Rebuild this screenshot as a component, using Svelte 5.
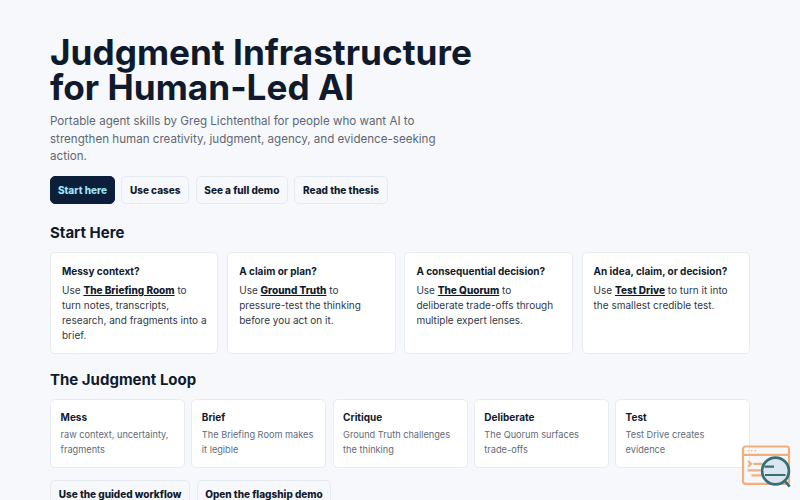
<script lang="ts">
	type Step = {
		title: string;
		text: string;
	};

	type Path = {
		title: string;
		skill: string;
		rest: string;
	};

	const links = ['Start here', 'Use cases', 'See a full demo', 'Read the thesis'];

	const paths: Path[] = [
		{
			title: 'Messy context?',
			skill: 'The Briefing Room',
			rest: 'to turn notes, transcripts, research, and fragments into a brief.'
		},
		{
			title: 'A claim or plan?',
			skill: 'Ground Truth',
			rest: 'to pressure-test the thinking before you act on it.'
		},
		{
			title: 'A consequential decision?',
			skill: 'The Quorum',
			rest: 'to deliberate trade-offs through multiple expert lenses.'
		},
		{
			title: 'An idea, claim, or decision?',
			skill: 'Test Drive',
			rest: 'to turn it into the smallest credible test.'
		}
	];

	const steps: Step[] = [
		{ title: 'Mess', text: 'raw context, uncertainty, fragments' },
		{ title: 'Brief', text: 'The Briefing Room makes it legible' },
		{ title: 'Critique', text: 'Ground Truth challenges the thinking' },
		{ title: 'Deliberate', text: 'The Quorum surfaces trade-offs' },
		{ title: 'Test', text: 'Test Drive creates evidence' }
	];
</script>

<main>
	<h1>Judgment Infrastructure for Human-Led AI</h1>
	<p class="lead">
		Portable agent skills by Greg Lichtenthal for people who want AI to strengthen human
		creativity, judgment, agency, and evidence-seeking action.
	</p>
	<nav class="actions">
		{#each links as link, i}
			<a class="button" class:primary={i === 0} href="#start">{link}</a>
		{/each}
	</nav>

	<h2 id="start">Start Here</h2>
	<div class="paths">
		{#each paths as path}
			<article>
				<h3>{path.title}</h3>
				<p>Use <a href="#start">{path.skill}</a> {path.rest}</p>
			</article>
		{/each}
	</div>

	<h2 class="loop-title">The Judgment Loop</h2>
	<div class="loop">
		{#each steps as step}
			<article>
				<h3>{step.title}</h3>
				<p>{step.text}</p>
			</article>
		{/each}
	</div>
	<div class="actions">
		<a class="button" href="#start">Use the guided workflow</a>
		<a class="button" href="#start">Open the flagship demo</a>
	</div>
</main>

<svg class="badge" viewBox="0 0 50 46" aria-hidden="true">
	<g fill="none" stroke="#f4ae7c" stroke-width="2.2">
		<rect x="2" y="2.5" width="46" height="37.4" rx="2.5" />
		<path d="M2 10.8h46M7 17l3.2 2.8L7 22.6M12.5 19.8h9M6.5 26.3h13M10.5 31.3h10" />
		<path d="M6.5 6.7h8.5" stroke-width="1.3" stroke-dasharray="1.5 2" />
	</g>
	<path d="M43.5 36.5l5.2 6.2" fill="none" stroke="#356f77" stroke-width="2.7" />
	<circle cx="34.5" cy="27" r="13.4" fill="#dbe6ee" stroke="#356f77" stroke-width="2.7" />
	<path d="M23.5 22.6h9.5M24 31h20.5" fill="none" stroke="#356f77" stroke-width="2.2" />
</svg>

<style>
	:global(body) {
		height: 500px;
		overflow: hidden;
		background: #f7f8fc;
	}

	main {
		width: 700px;
		margin: 0 auto;
		padding-top: 35px;
		color: #0f1b2d;
		font-family: Inter, sans-serif;
	}

	h1 {
		max-width: 450px;
		margin: 0;
		font-size: 35.2px;
		line-height: 35px;
		font-weight: 700;
	}

	.lead {
		max-width: 400px;
		margin: 8px 0 0;
		color: #5e6774;
		font-size: 11.6px;
		line-height: 17.5px;
	}

	.actions {
		display: flex;
		gap: 6.4px;
		margin-top: 11.5px;
	}

	.lead + .actions {
		margin-top: 10.5px;
	}

	.button {
		box-sizing: border-box;
		height: 28px;
		padding: 0 7.7px;
		border: 1px solid #e6eaf1;
		border-radius: 5px;
		color: #0f1b2d;
		font-size: 10px;
		line-height: 26px;
		font-weight: 800;
		text-decoration: none;
		white-space: nowrap;
	}

	.primary {
		padding: 0 6.9px;
		border-color: #0b1f3b;
		background: #0b1f3b;
		color: #9be5fa;
	}

	h2 {
		margin: 19px 0 10px;
		font-size: 15px;
		line-height: 19px;
		font-weight: 700;
	}

	.loop-title {
		margin-top: 16px;
	}

	.paths {
		display: grid;
		grid-template-columns: repeat(4, 1fr);
		gap: 8.75px;
	}

	.loop {
		display: grid;
		grid-template-columns: repeat(5, 1fr);
		gap: 6.25px;
	}

	article {
		box-sizing: border-box;
		border: 1px solid #e8ebf2;
		border-radius: 5px;
		background: #fff;
	}

	.paths article {
		height: 102px;
		padding: 11px 10.7px 0 11px;
	}

	.loop article {
		height: 69px;
		padding: 10px 9px 0 9.6px;
	}

	h3 {
		margin: 0;
		font-size: 10px;
		line-height: 15px;
		font-weight: 700;
	}

	article p {
		margin: 4px 0 0;
		color: #303846;
		font-size: 10px;
		line-height: 15px;
	}

	article a {
		color: #0f1b2d;
		font-weight: 800;
	}

	.loop p {
		margin-top: 2px;
		color: #636b77;
		font-size: 9.2px;
	}

	.badge {
		position: fixed;
		right: 9px;
		bottom: 10px;
		width: 50px;
		height: 46px;
	}
</style>
